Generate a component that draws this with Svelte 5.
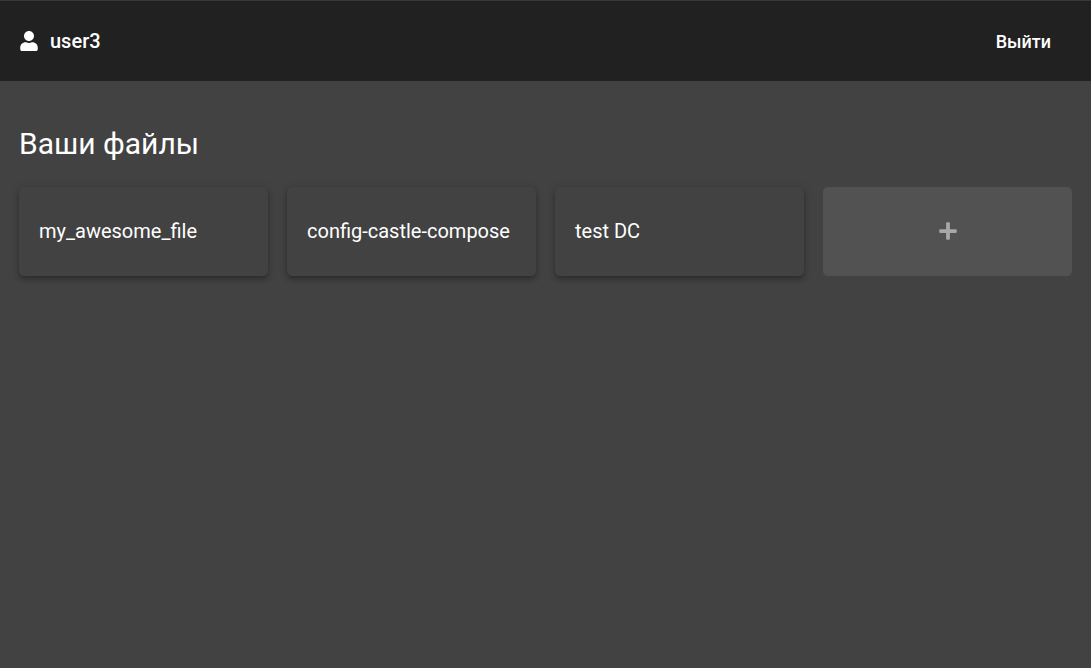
<script>
  const user = 'user3';
  const files = ['my_awesome_file', 'config-castle-compose', 'test DC'];
</script>

<header>
  <div class="user">
    <svg viewBox="0 0 448 512" aria-hidden="true">
      <path d="M224 256c70.7 0 128-57.3 128-128S294.7 0 224 0 96 57.3 96 128s57.3 128 128 128zm89.6 32h-16.7c-22.2 10.2-46.9 16-72.9 16s-50.6-5.8-72.9-16h-16.7C60.2 288 0 348.2 0 422.4V464c0 26.5 21.5 48 48 48h352c26.5 0 48-21.5 48-48v-41.6c0-74.2-60.2-134.4-134.4-134.4z" />
    </svg>
    <span>{user}</span>
  </div>
  <button class="logout">Выйти</button>
</header>

<main>
  <h1>Ваши файлы</h1>
  <div class="files">
    {#each files as file}
      <button class="card">{file}</button>
    {/each}
    <button class="card add" aria-label="Добавить файл">
      <svg viewBox="0 0 448 512" aria-hidden="true">
        <path d="M416 208H272V64c0-17.67-14.33-32-32-32h-32c-17.67 0-32 14.33-32 32v144H32c-17.67 0-32 14.33-32 32v32c0 17.67 14.33 32 32 32h144v144c0 17.67 14.33 32 32 32h32c17.67 0 32-14.33 32-32V304h144c17.67 0 32-14.33 32-32v-32c0-17.67-14.33-32-32-32z" />
      </svg>
    </button>
  </div>
</main>

<style>
  :global(body) {
    margin: 0;
    background: #424242;
    color: #fff;
    font-family: Roboto, sans-serif;
  }

  header {
    display: flex;
    align-items: center;
    justify-content: space-between;
    box-sizing: border-box;
    min-height: 81px;
    padding: 0 20px;
    border-top: 1px solid #343a3a;
    background: #212121;
  }

  .user {
    display: flex;
    align-items: center;
    gap: 12px;
    font-size: 20px;
    font-weight: 500;
    line-height: 24px;
  }

  svg {
    display: block;
    width: 18px;
    height: 20px;
    fill: currentColor;
  }

  button {
    border: 0;
    border-radius: 5px;
    background: transparent;
    color: inherit;
    font-family: inherit;
    cursor: pointer;
  }

  .logout {
    padding: 2px 20px 0;
    font-size: 18px;
    font-weight: 500;
    line-height: 36px;
  }

  main {
    padding: 45px 19px;
  }

  h1 {
    margin: 0 0 25px;
    font-size: 30px;
    font-weight: 400;
    line-height: 36px;
  }

  .files {
    display: grid;
    grid-template-columns: repeat(4, minmax(0, 1fr));
    gap: 19px;
  }

  .card {
    min-height: 89px;
    padding: 18px 20px 20px;
    background: #424242;
    font-size: 20px;
    line-height: 24px;
    text-align: left;
    box-shadow:
      0 2px 4px -1px rgba(0, 0, 0, 0.2),
      0 4px 5px 0 rgba(0, 0, 0, 0.14),
      0 1px 10px 0 rgba(0, 0, 0, 0.12);
  }

  .add {
    display: flex;
    align-items: center;
    justify-content: center;
    background: #525252;
    color: #a8a8a8;
    box-shadow: none;
  }
</style>
